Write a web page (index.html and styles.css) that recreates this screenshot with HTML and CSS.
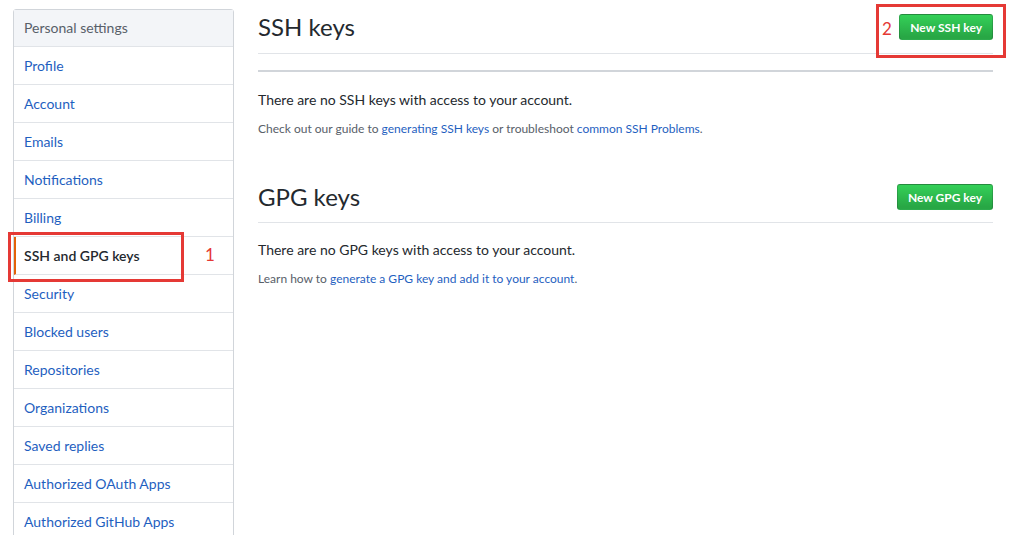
FILE: index.html
```html
<!DOCTYPE html>
<html>
<head>
    <meta name="viewport" content="width=device-width, initial-scale=1.0">
    <title>SSH and GPG keys</title>
    <link rel="stylesheet" href="styles.css">
</head>
<body>
    <div class="page">
        <nav class="menu">
            <h3 class="menu-heading">Personal settings</h3>
            <a class="menu-item" href="#">Profile</a>
            <a class="menu-item" href="#">Account</a>
            <a class="menu-item" href="#">Emails</a>
            <a class="menu-item" href="#">Notifications</a>
            <a class="menu-item" href="#">Billing</a>
            <a class="menu-item selected" href="#">SSH and GPG keys</a>
            <a class="menu-item" href="#">Security</a>
            <a class="menu-item" href="#">Blocked users</a>
            <a class="menu-item" href="#">Repositories</a>
            <a class="menu-item" href="#">Organizations</a>
            <a class="menu-item" href="#">Saved replies</a>
            <a class="menu-item" href="#">Authorized OAuth Apps</a>
            <a class="menu-item" href="#">Authorized GitHub Apps</a>
        </nav>

        <div class="content">
            <div class="subhead">
                <h2>SSH keys</h2>
                <a class="btn" href="#">New SSH key</a>
            </div>
            <div class="listgroup"></div>
            <p class="blank">There are no SSH keys with access to your account.</p>
            <p class="note">Check out our guide to <a href="#">generating SSH keys</a> or troubleshoot <a href="#">common SSH Problems</a>.</p>

            <div class="subhead gpg">
                <h2>GPG keys</h2>
                <a class="btn" href="#">New GPG key</a>
            </div>
            <p class="blank first">There are no GPG keys with access to your account.</p>
            <p class="note">Learn how to <a href="#">generate a GPG key and add it to your account</a>.</p>
        </div>
    </div>

    <!-- annotations drawn over the screenshot -->
    <div class="mark mark-1"></div>
    <span class="mark-num num-1">1</span>
    <div class="mark mark-2"></div>
    <span class="mark-num num-2">2</span>
</body>
</html>
```

FILE: styles.css
```css
body {
    font-family: Lato, "Segoe UI", sans-serif;
    margin: 0;
    padding: 0;
    color: #24292e;
    background: #fff;
    overflow: hidden;
}

a {
    color: #1f5fbf;
    text-decoration: none;
}

.page {
    display: flex;
    align-items: flex-start;
    padding: 9px 0 0 13px;
    gap: 24px;
}

.menu {
    display: flex;
    flex-direction: column;
    width: 221px;
    flex-shrink: 0;
    border: 1px solid #d1d5da;
    border-radius: 3px 3px 0 0;
    box-sizing: border-box;
}

.menu-heading {
    margin: 0;
    height: 36px;
    line-height: 36px;
    padding-left: 10px;
    font-size: 14px;
    font-weight: normal;
    color: #586069;
    background-color: #f3f5f8;
    border-bottom: 1px solid #e1e4e8;
}

.menu-item {
    display: block;
    height: 37px;
    line-height: 37px;
    padding-left: 10px;
    font-size: 14px;
    border-bottom: 1px solid #e1e4e8;
}

.menu-item.selected {
    color: #24292e;
    font-weight: 600;
    border-left: 2px solid #e36209;
    padding-left: 8px;
}

.content {
    width: 735px;
}

.subhead {
    display: flex;
    align-items: center;
    justify-content: space-between;
    padding-bottom: 8px;
    border-bottom: 1px solid #e1e4e8;
}

.subhead.gpg {
    margin-top: 41px;
    padding-bottom: 7px;
}

.subhead h2 {
    margin: 0;
    font-size: 24px;
    font-weight: normal;
    line-height: 36px;
}

.btn {
    display: inline-block;
    height: 26px;
    line-height: 26px;
    padding: 0 10px;
    font-size: 12px;
    font-weight: bold;
    color: #fff;
    background-image: linear-gradient(-180deg, #34d058 0%, #28a745 90%);
    border: 1px solid rgba(27, 31, 35, 0.2);
    border-radius: 3px;
    box-sizing: border-box;
}

.listgroup {
    margin-top: 16px;
    border-top: 2px solid #d1d5da;
}

.blank {
    margin: 17px 0 0;
    font-size: 14px;
    line-height: 21px;
}

.blank.first {
    margin-top: 16px;
}

.note {
    margin: 10px 0 0;
    font-size: 12px;
    line-height: 18px;
    color: #586069;
}

.mark {
    position: absolute;
    border: 3px solid #e53935;
    box-sizing: border-box;
}

.mark-1 {
    left: 8px;
    top: 232px;
    width: 176px;
    height: 50px;
}

.mark-2 {
    left: 876px;
    top: 4px;
    width: 130px;
    height: 54px;
}

.mark-num {
    position: absolute;
    font-size: 17px;
    color: #e53935;
    line-height: 20px;
}

.num-1 {
    left: 205px;
    top: 245px;
}

.num-2 {
    left: 882px;
    top: 19px;
}
```
